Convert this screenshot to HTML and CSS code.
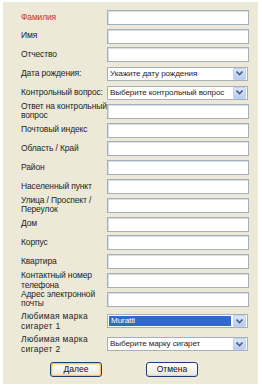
FILE: index.html
```html
<!DOCTYPE html>
<html lang="ru">
<head>
  <meta charset="UTF-8" />
  <meta name="viewport" content="width=device-width, initial-scale=1" />
  <title>Анкета</title>
  <link rel="stylesheet" href="styles.css">
</head>
<body>
  <form class="panel">
    <div class="row"><label class="required">Фамилия</label><span class="field"></span></div>
    <div class="row"><label>Имя</label><span class="field"></span></div>
    <div class="row"><label>Отчество</label><span class="field"></span></div>
    <div class="row"><label>Дата рождения:</label>
      <span class="combo"><span class="combo-text">Укажите дату рождения</span><span class="combo-btn"><svg viewBox="0 0 7 5" width="7" height="5"><path d="M0.5 0.5 L3.5 3.5 L6.5 0.5" fill="none" stroke="#4d6185" stroke-width="1.6"/></svg></span></span>
    </div>
    <div class="row"><label>Контрольный вопрос:</label>
      <span class="combo"><span class="combo-text">Выберите контрольный вопрос</span><span class="combo-btn"><svg viewBox="0 0 7 5" width="7" height="5"><path d="M0.5 0.5 L3.5 3.5 L6.5 0.5" fill="none" stroke="#4d6185" stroke-width="1.6"/></svg></span></span>
    </div>
    <div class="row"><label>Ответ на контрольный вопрос</label><span class="field"></span></div>
    <div class="row"><label>Почтовый индекс</label><span class="field"></span></div>
    <div class="row"><label>Область / Край</label><span class="field"></span></div>
    <div class="row"><label>Район</label><span class="field"></span></div>
    <div class="row"><label>Населенный пункт</label><span class="field"></span></div>
    <div class="row"><label>Улица / Проспект / Переулок</label><span class="field"></span></div>
    <div class="row"><label>Дом</label><span class="field"></span></div>
    <div class="row"><label>Корпус</label><span class="field"></span></div>
    <div class="row"><label>Квартира</label><span class="field"></span></div>
    <div class="row"><label>Контактный номер телефона</label><span class="field"></span></div>
    <div class="row"><label>Адрес электронной почты</label><span class="field"></span></div>
    <div class="row tall first-tall"><label class="wide">Любимая марка сигарет 1</label>
      <span class="combo"><span class="combo-text selected">Muratti</span><span class="combo-btn"><svg viewBox="0 0 7 5" width="7" height="5"><path d="M0.5 0.5 L3.5 3.5 L6.5 0.5" fill="none" stroke="#4d6185" stroke-width="1.6"/></svg></span></span>
    </div>
    <div class="row tall"><label class="wide">Любимая марка сигарет 2</label>
      <span class="combo"><span class="combo-text">Выберите марку сигарет</span><span class="combo-btn"><svg viewBox="0 0 7 5" width="7" height="5"><path d="M0.5 0.5 L3.5 3.5 L6.5 0.5" fill="none" stroke="#4d6185" stroke-width="1.6"/></svg></span></span>
    </div>
    <div class="buttons">
      <button type="button" class="btn default">Далее</button>
      <button type="button" class="btn">Отмена</button>
    </div>
  </form>
</body>
</html>
```

FILE: styles.css
```css
body {
  margin: 0;
  background: #ffffff;
  font-family: 'Liberation Sans', Arial, sans-serif;
  font-size: 8.5px;
  color: #1e1e1e;
}

.panel {
  margin: 2px 4px 0 3px;
  height: 382px;
  box-sizing: border-box;
  padding: 6px 0 0 18px;
  background: #ece9d8;
}

.row {
  display: flex;
  align-items: center;
  height: 18.8px;
}

.row.tall {
  height: 23px;
}

.row.first-tall {
  margin-top: 1px;
}

.row label {
  width: 86px;
  flex: none;
  line-height: 9.5px;
  letter-spacing: -0.15px;
}

.row label.wide {
  width: 80px;
  margin-right: 6px;
  letter-spacing: 0.3px;
  line-height: 10.5px;
}

.required {
  color: #d42c2c;
}

.field {
  width: 142px;
  height: 15px;
  box-sizing: border-box;
  background: #fff;
  border: 1px solid #a7b0ba;
  box-shadow: inset 1px 1px 0 #d9dee3;
}

.combo {
  width: 141px;
  height: 14px;
  box-sizing: border-box;
  background: #fff;
  border: 1px solid #a7b0ba;
  display: flex;
  align-items: stretch;
}

.combo-text {
  flex: 1;
  padding-left: 2px;
  font-size: 8.1px;
  line-height: 12px;
  letter-spacing: -0.1px;
  white-space: nowrap;
  overflow: hidden;
}

.combo-text.selected {
  background: #3169c6;
  color: #fff;
  margin: 1px;
  line-height: 10px;
}

.combo-btn {
  width: 13px;
  flex: none;
  margin: 0 1px;
  background: linear-gradient(#dbe6fb, #b9ccf3);
  border: 1px solid #c1d1f0;
  border-radius: 1px;
  display: flex;
  align-items: center;
  justify-content: center;
  box-sizing: border-box;
}

.buttons {
  display: flex;
  gap: 44px;
  margin: 6px 0 0 29px;
}

.btn {
  width: 52px;
  height: 15px;
  padding: 0;
  font-family: 'Liberation Sans', Arial, sans-serif;
  font-size: 8.5px;
  color: #111;
  background: linear-gradient(#ffffff, #ecebe6 85%, #d6d0c5);
  border: 1px solid #1c3f73;
  border-radius: 3px;
}

.btn.default {
  box-shadow: inset 0 0 0 1px #f5c572, inset 0 0 0 2px #fbe2a8;
}
```
